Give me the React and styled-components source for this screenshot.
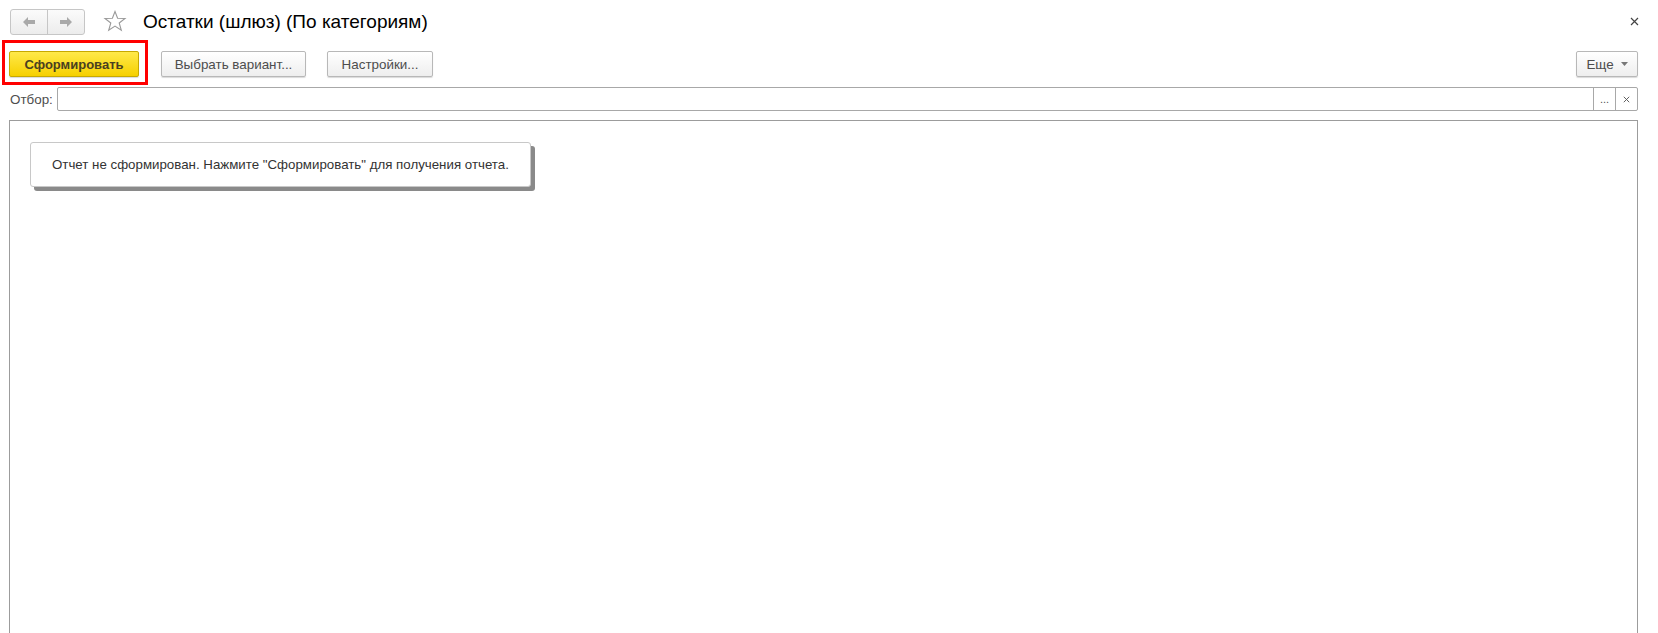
import React from "react";
import styled, { createGlobalStyle } from "styled-components";

const Global = createGlobalStyle`
  html, body { margin: 0; padding: 0; background: #fff; }
  body { font-family: Arial, "Liberation Sans", sans-serif; color: #333; overflow: hidden; }
`;

const Page = styled.div`
  width: 1658px;
  height: 633px;
  display: flex;
  flex-direction: column;
  overflow: hidden;
  & > * { flex-shrink: 0; }
`;

const Header = styled.div`
  height: 40px;
  display: flex;
  align-items: flex-start;
  padding: 9px 0 0 10px;
  box-sizing: border-box;
`;

const NavGroup = styled.div`
  display: flex;
  height: 24px;
  width: 73px;
  border: 1px solid #c6c6c6;
  border-radius: 3px;
  overflow: hidden;
  background: linear-gradient(#fbfbfb, #ececec);
`;

const NavBtn = styled.div`
  flex: 1;
  display: flex;
  align-items: center;
  justify-content: center;
  border-left: ${(p) => (p.$divider ? "1px solid #c6c6c6" : "none")};
`;

const Star = styled.div`
  margin-left: 18px;
  margin-top: 1px;
  width: 24px;
  height: 22px;
  display: flex;
`;

const Title = styled.div`
  margin-left: 16px;
  margin-top: 2px;
  font-size: 19px;
  color: #000;
  line-height: 22px;
`;

const CloseX = styled.div`
  margin-left: auto;
  margin-right: 19px;
  margin-top: 8px;
  width: 9px;
  height: 9px;
  display: flex;
`;

const Toolbar = styled.div`
  height: 47px;
  display: flex;
  align-items: flex-start;
  padding-left: 2px;
  padding-right: 20px;
  box-sizing: border-box;
`;

const Highlight = styled.div`
  border: 3px solid #ff0000;
  padding: 8px 6px 5px 4px;
  display: flex;
`;

const Button = styled.div`
  height: 26px;
  flex-shrink: 0;
  box-sizing: border-box;
  padding: 0 ${(p) => p.$px || 13}px;
  width: ${(p) => (p.$w ? p.$w + "px" : "auto")};
  margin-left: ${(p) => p.$ml || 0}px;
  margin-top: 11px;
  display: flex;
  align-items: center;
  justify-content: center;
  gap: 7px;
  font-size: 13.4px;
  color: #4d4d4d;
  border: 1px solid #b8b8b8;
  border-radius: 2px;
  background: linear-gradient(#ffffff, #eeeeee);
  box-shadow: 0 1px 1px rgba(0, 0, 0, 0.15);
  white-space: nowrap;
`;

const PrimaryButton = styled(Button)`
  margin-top: 0;
  width: 130px;
  font-size: 13px;
  font-weight: bold;
  color: #4a4020;
  border-color: #c7a900;
  background: linear-gradient(#ffe94a, #f6d000);
`;

const Spacer = styled.div`
  flex: 1;
`;

const FilterRow = styled.div`
  height: 24px;
  display: flex;
  align-items: center;
  padding: 0 20px 0 10px;
`;

const Label = styled.div`
  font-size: 13.4px;
  color: #4d4d4d;
  width: 47px;
`;

const FilterField = styled.div`
  flex: 1;
  height: 24px;
  box-sizing: border-box;
  display: flex;
  border: 1px solid #a8a8a8;
  border-radius: 2px;
  background: #fff;
`;

const FieldInput = styled.div`
  flex: 1;
`;

const FieldBtn = styled.div`
  width: 21px;
  border-left: 1px solid #a8a8a8;
  display: flex;
  align-items: center;
  justify-content: center;
  font-size: 11px;
  color: #555;
`;

const Panel = styled.div`
  margin: 9px 20px 0 9px;
  height: 600px;
  border: 1px solid #9c9c9c;
  border-bottom: none;
  padding: 21px 0 0 20px;
`;

const Message = styled.div`
  width: 501px;
  height: 45px;
  box-sizing: border-box;
  border: 1px solid #c8c8c8;
  border-radius: 3px;
  background: #fff;
  box-shadow: 4px 4px 0 #8a8a8a;
  display: flex;
  align-items: center;
  padding-left: 21px;
  font-size: 13.3px;
  color: #333;
`;

const LeftArrow = () => (
  <svg width="14" height="12" viewBox="0 0 14 12">
    <path d="M1 6 L6 1 L6 4 L13 4 L13 8 L6 8 L6 11 Z" fill="#a9a9a9" />
  </svg>
);

const RightArrow = () => (
  <svg width="14" height="12" viewBox="0 0 14 12">
    <path d="M13 6 L8 1 L8 4 L1 4 L1 8 L8 8 L8 11 Z" fill="#a9a9a9" />
  </svg>
);

const StarIcon = () => (
  <svg width="24" height="22" viewBox="0 0 24 22">
    <path
      d="M12 1.5 L14.6 8.3 L22 8.5 L16.2 13 L18.3 20.3 L12 16.1 L5.7 20.3 L7.8 13 L2 8.5 L9.4 8.3 Z"
      fill="none"
      stroke="#9a9a9a"
      strokeWidth="1.1"
      strokeLinejoin="miter"
    />
  </svg>
);

const XIcon = ({ size = 9, color = "#444" }) => (
  <svg width={size} height={size} viewBox="0 0 9 9">
    <path d="M1 1 L8 8 M8 1 L1 8" stroke={color} strokeWidth="1.2" />
  </svg>
);

const Caret = () => (
  <svg width="7" height="4" viewBox="0 0 7 4">
    <path d="M0 0 L7 0 L3.5 4 Z" fill="#777" />
  </svg>
);

export default function App() {
  return (
    <>
      <Global />
      <Page>
        <Header>
          <NavGroup>
            <NavBtn>
              <LeftArrow />
            </NavBtn>
            <NavBtn $divider>
              <RightArrow />
            </NavBtn>
          </NavGroup>
          <Star>
            <StarIcon />
          </Star>
          <Title>Остатки (шлюз) (По категориям)</Title>
          <CloseX>
            <XIcon />
          </CloseX>
        </Header>
        <Toolbar>
          <Highlight>
            <PrimaryButton>Сформировать</PrimaryButton>
          </Highlight>
          <Button $w={145} $ml={13}>Выбрать вариант...</Button>
          <Button $w={106} $ml={21}>Настройки...</Button>
          <Spacer />
          <Button $w={62} $px={8}>
            Еще <Caret />
          </Button>
        </Toolbar>
        <FilterRow>
          <Label>Отбор:</Label>
          <FilterField>
            <FieldInput />
            <FieldBtn>...</FieldBtn>
            <FieldBtn>
              <XIcon size={7} color="#555" />
            </FieldBtn>
          </FilterField>
        </FilterRow>
        <Panel>
          <Message>Отчет не сформирован. Нажмите "Сформировать" для получения отчета.</Message>
        </Panel>
      </Page>
    </>
  );
}
